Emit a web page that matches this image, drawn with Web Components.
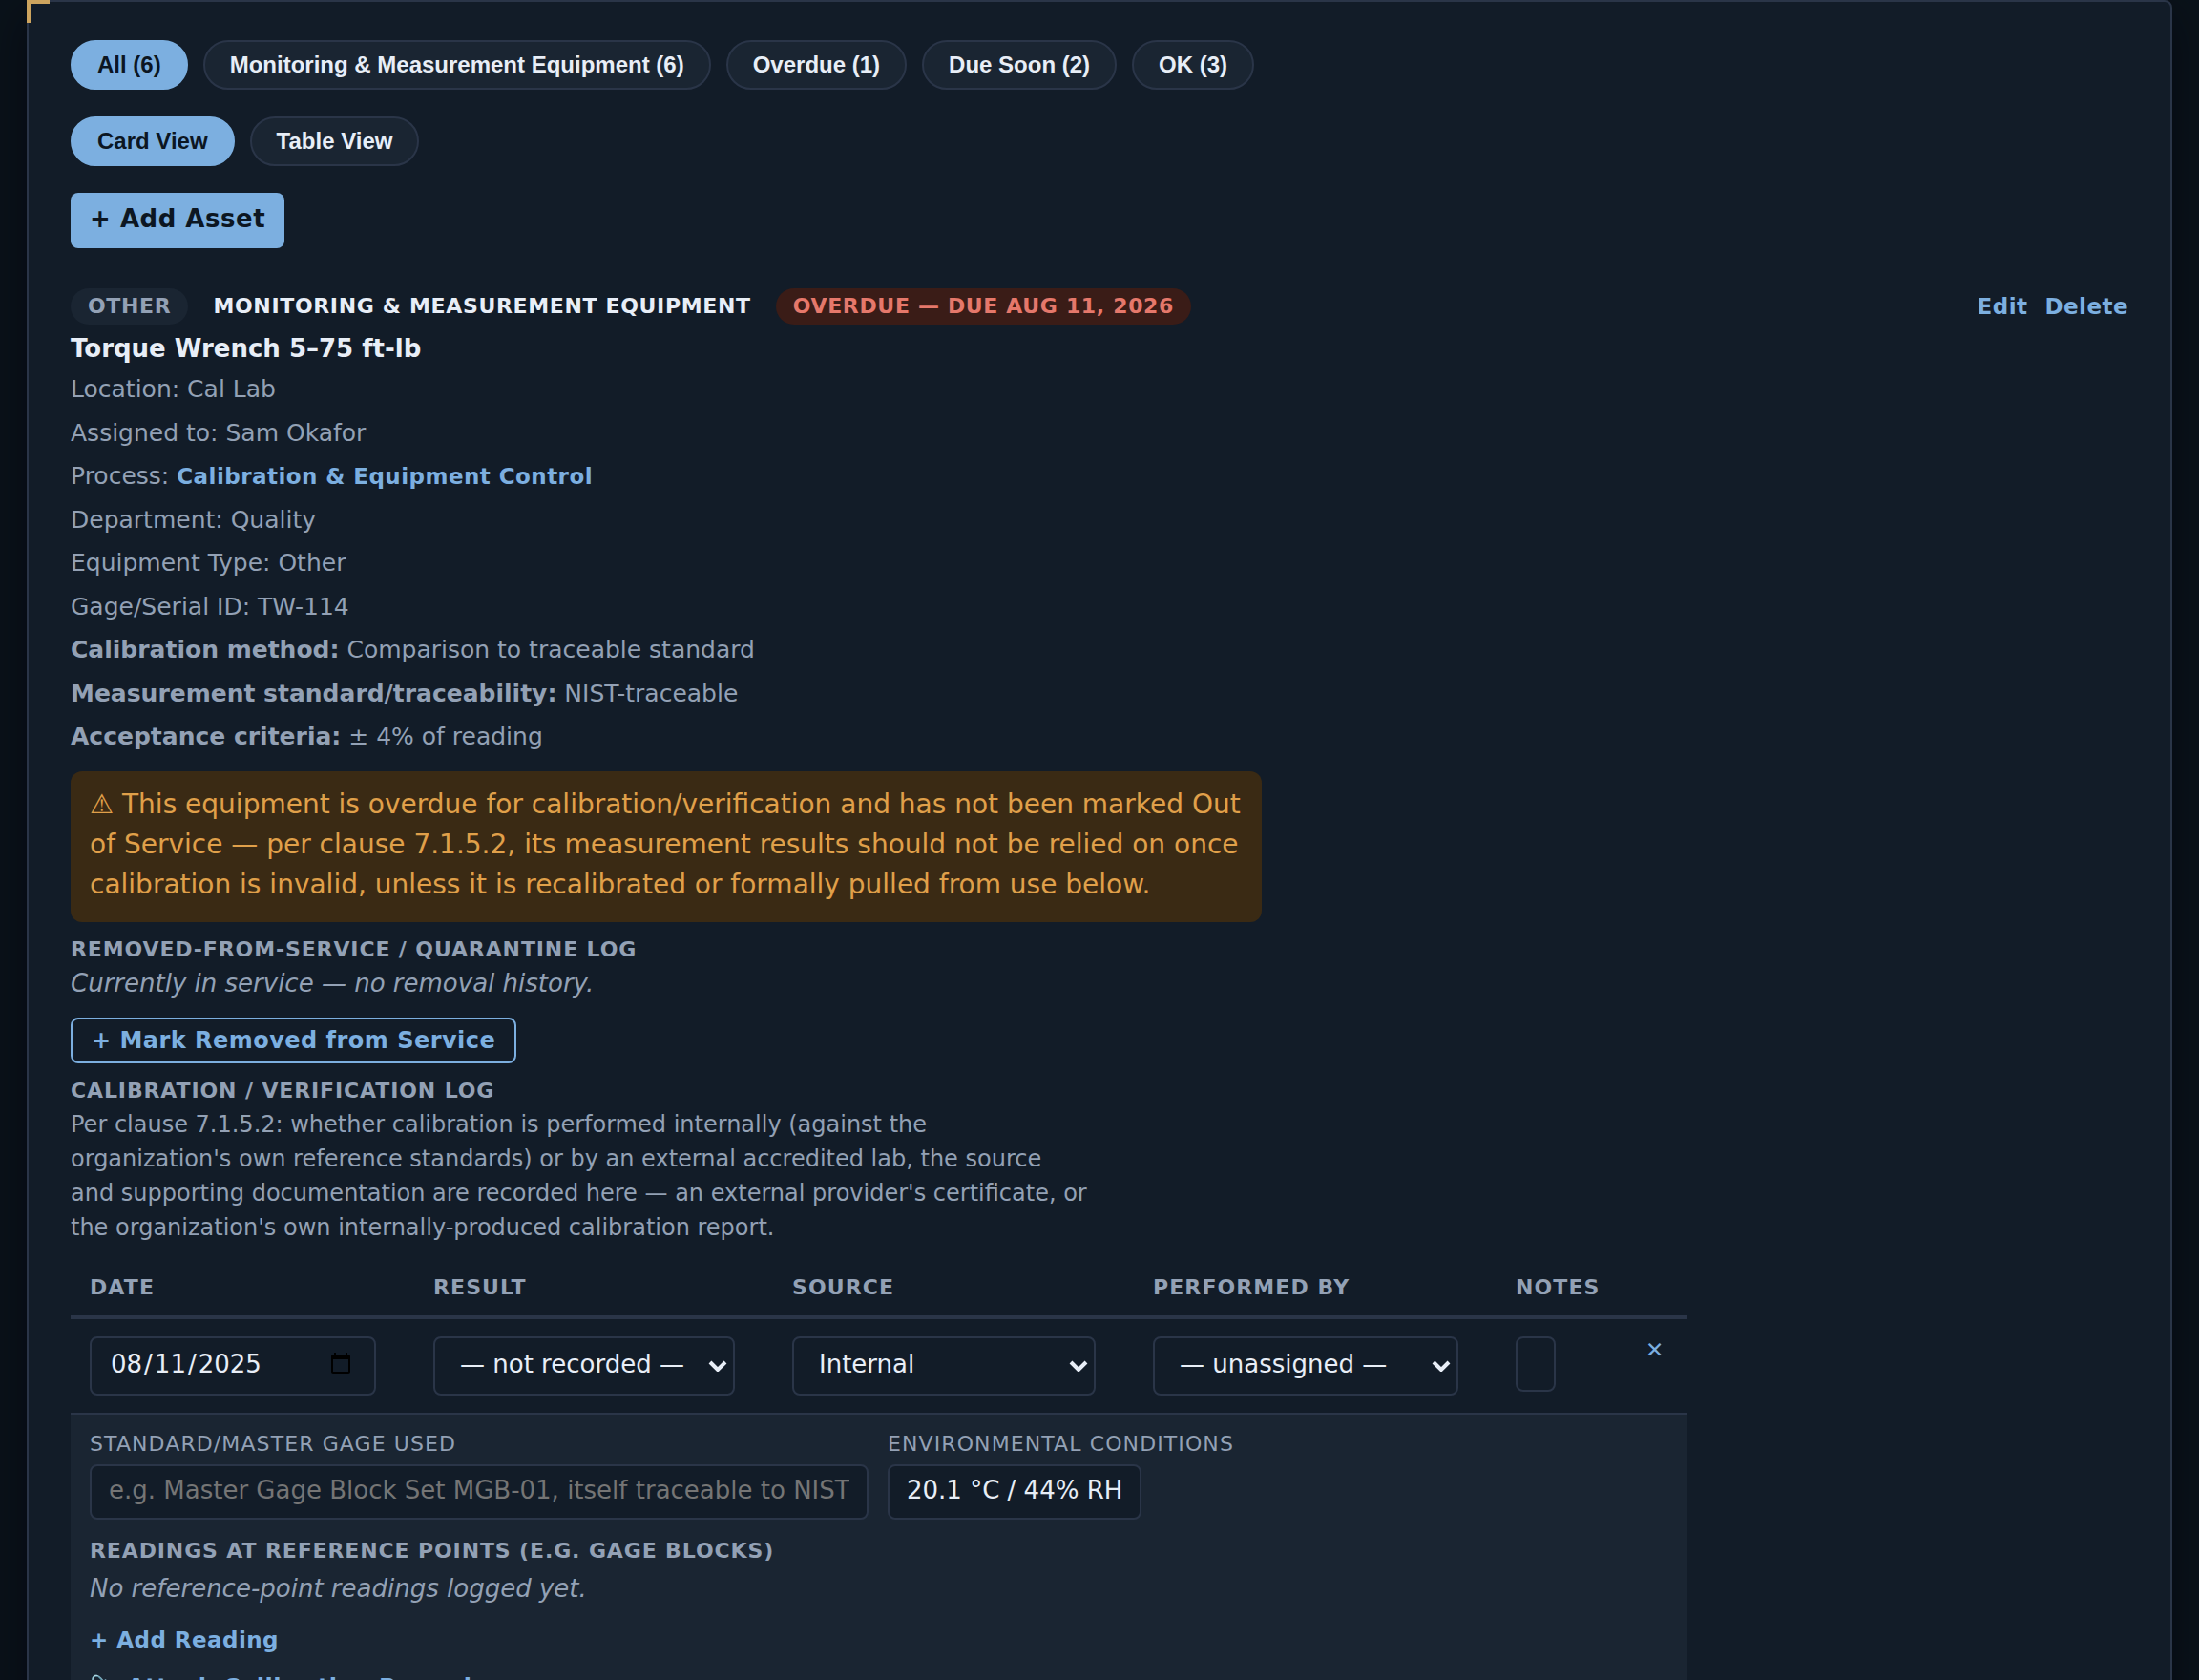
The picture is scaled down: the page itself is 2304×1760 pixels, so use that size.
<!DOCTYPE html>
<html lang="en">
<head>
<meta charset="utf-8">
<title>Assets</title>
<style>
  html, body { margin: 0; height: 100%; overflow: hidden; }
  body {
    --line: #2a3548; --surface: #121c28; --raised: #1a2532; --ink: #e8eef7;
    --muted: #93a1b5; --accent: #7cafe0; --accent-ink: #0c1622; --brass: #cda45e;
    background: #0a121a; color: var(--ink);
    font-family: "DejaVu Sans", sans-serif; font-size: 26px; line-height: 1.5;
  }
</style>
</head>
<body>
<asset-panel>
  <pill-group label="Filter by status">
    <pill-button active>All (6)</pill-button>
    <pill-button>Monitoring &amp; Measurement Equipment (6)</pill-button>
    <pill-button>Overdue (1)</pill-button>
    <pill-button>Due Soon (2)</pill-button>
    <pill-button>OK (3)</pill-button>
  </pill-group>
  <pill-group label="View">
    <pill-button active>Card View</pill-button>
    <pill-button>Table View</pill-button>
  </pill-group>
  <action-button kind="primary">+ Add Asset</action-button>
  <asset-card></asset-card>
</asset-panel>

<script>
function define(name, html, setup) {
  const template = document.createElement('template');
  template.innerHTML = html;
  customElements.define(name, class extends HTMLElement {
    constructor() {
      super();
      this.attachShadow({ mode: 'open' }).append(template.content.cloneNode(true));
    }
    connectedCallback() { if (setup) setup(this, this.shadowRoot); }
  });
}

define('asset-panel', `
  <style>
    :host { display: block; }
    main {
      position: relative; box-sizing: border-box; min-height: 1900px;
      margin: 0 28px; padding: 40px 44px;
      display: flex; flex-direction: column; align-items: stretch; gap: 28px;
      background: var(--surface); border: 2px solid var(--line); border-radius: 8px;
      box-shadow: 0 16px 48px rgba(0, 0, 10, .5);
    }
    main::before {
      content: ""; position: absolute; top: -2px; left: -2px; width: 20px; height: 20px;
      border-top: 4px solid var(--brass); border-left: 4px solid var(--brass);
    }
  </style>
  <main><slot></slot></main>`);

define('pill-group', `
  <style>
    :host { display: block; }
    div { display: flex; flex-wrap: wrap; gap: 16px; }
  </style>
  <div role="group"><slot></slot></div>`,
  (host, root) => root.querySelector('div').setAttribute('aria-label', host.getAttribute('label')));

define('pill-button', `
  <style>
    :host { display: block; }
    button {
      display: block; padding: 10px 26px; border: 2px solid var(--line); border-radius: 40px;
      background: var(--raised); color: var(--ink);
      font: bold 24px/28px "Liberation Sans", Arial, sans-serif;
    }
    :host([active]) button { background: var(--accent); border-color: var(--accent); color: var(--accent-ink); }
  </style>
  <button type="button"><slot></slot></button>`,
  (host, root) => root.querySelector('button').setAttribute('aria-pressed', host.hasAttribute('active')));

define('action-button', `
  <style>
    :host { display: block; }
    button {
      display: block; margin: 0; padding: 0; border: 0; background: none; color: var(--accent);
      font: bold 24px/28px "DejaVu Sans", sans-serif; letter-spacing: .02em;
    }
    :host([kind="primary"]) button {
      padding: 12px 20px 16px; border-radius: 8px; font-size: 26px; line-height: 30px;
      background: var(--accent); color: var(--accent-ink);
    }
    :host([kind="outline"]) button { padding: 8px 20px; border: 2px solid var(--accent); border-radius: 8px; }
    :host([kind="small"]) button { font-size: 23px; }
  </style>
  <button type="button"><slot></slot></button>`);

define('status-badge', `
  <style>
    :host {
      display: block; padding: 4px 18px; border-radius: 20px; color: var(--ink);
      font-weight: bold; font-size: 22px; line-height: 30px; letter-spacing: .03em; text-transform: uppercase;
    }
    :host([tone="neutral"]) { background: var(--raised); color: var(--muted); }
    :host([tone="danger"]) { background: #3a1c17; color: #e5786b; }
  </style>
  <slot></slot>`);

define('section-title', `
  <style>
    :host { display: block; }
    h4 {
      margin: 0; font-size: 22px; line-height: 34px; font-weight: bold; letter-spacing: .04em;
      text-transform: uppercase; color: var(--muted);
    }
  </style>
  <h4><slot></slot></h4>`);

define('choice-field', `
  <style>
    :host { display: grid; align-items: center; }
    select, svg { grid-area: 1 / 1; }
    select {
      appearance: none; box-sizing: border-box; width: 100%; height: 62px; margin: 0; padding: 12px 26px 16px;
      border: 2px solid var(--line); border-radius: 8px; background: var(--surface); color: var(--ink);
      font: 26px/30px "DejaVu Sans", sans-serif;
    }
    svg { justify-self: end; margin-right: 8px; pointer-events: none; }
  </style>
  <select><option></option></select>
  <svg width="20" height="12" viewBox="0 0 20 12" fill="none" stroke="#e8eef7" stroke-width="4"><path d="M2 2l8 8 8-8"/></svg>`,
  (host, root) => {
    root.querySelector('option').textContent = host.getAttribute('value');
    root.querySelector('select').setAttribute('aria-label', host.getAttribute('label'));
  });

define('calibration-log', `
  <style>
    :host { display: block; }
    table { border-collapse: collapse; table-layout: fixed; width: 1694px; max-width: 100%; }
    th, td { padding: 0 20px; text-align: left; vertical-align: top; }
    th {
      padding: 9px 20px 13px; font-size: 22px; line-height: 32px; font-weight: bold; letter-spacing: .05em;
      text-transform: uppercase; color: var(--muted); border-bottom: 4px solid var(--line);
    }
    .entry td { padding: 18px 40px 18px 20px; border-bottom: 2px solid var(--line); }
    .entry td.tight { padding-right: 0; }
    .detail td { padding: 16px 20px; background: var(--raised); }
    input {
      box-sizing: border-box; display: block; width: 100%; height: 58px; margin: 0; padding: 10px 18px 14px;
      border: 2px solid var(--line); border-radius: 8px; background: var(--surface); color: var(--ink);
      font: 26px/30px "DejaVu Sans", sans-serif;
    }
    input[type="date"] { height: 62px; padding: 12px 20px 16px 18px; }
    input::-webkit-datetime-edit-month-field,
    input::-webkit-datetime-edit-day-field,
    input::-webkit-datetime-edit-year-field { padding: 0 2px; }
    input.note { width: 42px; }
    input::placeholder { color: #757575; }
    .fields { display: flex; gap: 20px; }
    .field { display: flex; flex-direction: column; align-items: flex-start; gap: 6px; }
    label {
      font-size: 22px; line-height: 30px; letter-spacing: .05em; text-transform: uppercase; color: var(--muted);
    }
    #standard { width: 816px; }
    #environment { width: 266px; }
    section-title { margin-top: 16px; }
    p { margin: 2px 0 20px; font-style: italic; line-height: 40px; color: var(--muted); }
    .links { display: flex; flex-direction: column; gap: 22px; }
  </style>
  <table>
    <colgroup>
      <col style="width:360px"><col style="width:376px"><col style="width:378px">
      <col style="width:380px"><col style="width:136px"><col>
    </colgroup>
    <thead>
      <tr><th>Date</th><th>Result</th><th>Source</th><th>Performed By</th><th>Notes</th><th></th></tr>
    </thead>
    <tbody>
      <tr class="entry">
        <td><input type="date" value="2025-08-11" aria-label="Date"></td>
        <td><choice-field label="Result" value="— not recorded —"></choice-field></td>
        <td><choice-field label="Source" value="Internal"></choice-field></td>
        <td><choice-field label="Performed by" value="— unassigned —"></choice-field></td>
        <td class="tight"><input class="note" type="text" aria-label="Notes"></td>
        <td class="tight"><action-button kind="small">✕</action-button></td>
      </tr>
      <tr class="detail">
        <td colspan="6">
          <div class="fields">
            <div class="field">
              <label for="standard">Standard/Master Gage Used</label>
              <input id="standard" type="text" placeholder="e.g. Master Gage Block Set MGB-01, itself traceable to NIST">
            </div>
            <div class="field">
              <label for="environment">Environmental Conditions</label>
              <input id="environment" type="text" value="20.1 °C / 44% RH">
            </div>
          </div>
          <section-title>Readings at Reference Points (e.g. gage blocks)</section-title>
          <p>No reference-point readings logged yet.</p>
          <div class="links">
            <action-button kind="small">+ Add Reading</action-button>
            <action-button>📎 Attach Calibration Record</action-button>
          </div>
        </td>
      </tr>
    </tbody>
  </table>`);

define('asset-card', `
  <style>
    :host { display: block; margin-top: 14px; }
    header { display: flex; align-items: center; gap: 8px; }
    .actions { display: flex; gap: 18px; margin-left: auto; }
    h3 { margin: 6px 0 5px; font-size: 26px; line-height: 38px; }
    ul { list-style: none; margin: 0; padding: 0; display: flex; flex-direction: column; gap: 8px; font-size: 25px; color: var(--muted); }
    a { font-size: 23px; line-height: 1; font-weight: bold; letter-spacing: .02em; color: var(--accent); text-decoration: none; }
    .alert {
      box-sizing: border-box; max-width: 1248px; margin: 17px 0 12px; padding: 14px 20px 18px; border-radius: 12px;
      background: #3a2a14; color: #e0a04a; font-size: 28px;
    }
    .none { margin: 0 0 18px; font-style: italic; line-height: 36px; color: var(--muted); }
    action-button[kind="outline"] { width: fit-content; margin-bottom: 12px; }
    .hint { margin: 0 0 20px; max-width: 70ch; font-size: 24px; color: var(--muted); }
  </style>
  <header>
    <status-badge tone="neutral">Other</status-badge>
    <status-badge>Monitoring &amp; Measurement Equipment</status-badge>
    <status-badge tone="danger">Overdue — due Aug 11, 2026</status-badge>
    <div class="actions">
      <action-button kind="small">Edit</action-button>
      <action-button kind="small">Delete</action-button>
    </div>
  </header>
  <h3>Torque Wrench 5–75 ft-lb</h3>
  <ul>
    <li>Location: Cal Lab</li>
    <li>Assigned to: Sam Okafor</li>
    <li>Process: <a href="#process">Calibration &amp; Equipment Control</a></li>
    <li>Department: Quality</li>
    <li>Equipment Type: Other</li>
    <li>Gage/Serial ID: TW-114</li>
    <li><strong>Calibration method:</strong> Comparison to traceable standard</li>
    <li><strong>Measurement standard/traceability:</strong> NIST-traceable</li>
    <li><strong>Acceptance criteria:</strong> ± 4% of reading</li>
  </ul>
  <div class="alert" role="alert">⚠ This equipment is overdue for calibration/verification and has not been marked Out of Service — per clause 7.1.5.2, its measurement results should not be relied on once calibration is invalid, unless it is recalibrated or formally pulled from use below.</div>
  <section-title>Removed-from-Service / Quarantine Log</section-title>
  <p class="none">Currently in service — no removal history.</p>
  <action-button kind="outline">+ Mark Removed from Service</action-button>
  <section-title>Calibration / Verification Log</section-title>
  <p class="hint">Per clause 7.1.5.2: whether calibration is performed internally (against the organization's own reference standards) or by an external accredited lab, the source and supporting documentation are recorded here — an external provider's certificate, or the organization's own internally-produced calibration report.</p>
  <calibration-log></calibration-log>`);
</script>
</body>
</html>
